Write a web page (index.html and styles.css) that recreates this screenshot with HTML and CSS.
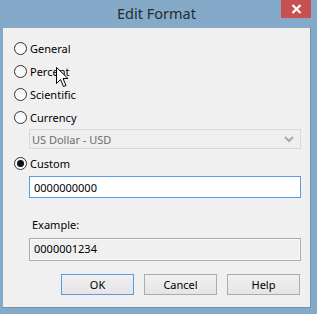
FILE: index.html
```html
<!DOCTYPE html>
<html lang="en">
  <head>
    <meta charset="UTF-8" />
    <meta name="viewport" content="width=device-width, initial-scale=1.0" />
    <title>Edit Format</title>
    <link rel="stylesheet" href="styles.css">
  </head>
  <body>
    <div class="window">
      <div class="titlebar">
        <span></span>
        <span class="title">Edit Format</span>
        <button type="button" class="close">
          <svg width="11" height="10" viewBox="0 0 11 10">
            <path d="M1.5 1 L9.5 9 M9.5 1 L1.5 9" stroke="#fff" stroke-width="2.2" />
          </svg>
        </button>
      </div>
      <div class="content">
        <label class="option"><input type="radio" name="fmt" /> General</label>
        <label class="option"><input type="radio" name="fmt" /> Percent</label>
        <label class="option"><input type="radio" name="fmt" /> Scientific</label>
        <label class="option"><input type="radio" name="fmt" /> Currency</label>
        <div class="select disabled">
          <span>US Dollar - USD</span>
          <svg width="10" height="7" viewBox="0 0 10 7">
            <path d="M1 1 L5 5 L9 1" fill="none" stroke="#a8a8a8" stroke-width="2" />
          </svg>
        </div>
        <label class="option custom"><input type="radio" name="fmt" checked /> Custom</label>
        <input type="text" class="field" value="0000000000" />
        <div class="example-label">Example:</div>
        <div class="example">0000001234</div>
        <div class="buttons">
          <button type="button" class="btn default">OK</button>
          <button type="button" class="btn">Cancel</button>
          <button type="button" class="btn">Help</button>
        </div>
      </div>
    </div>

    <!-- mouse pointer over the Percent option -->
    <svg class="pointer" width="13" height="21" viewBox="0 0 13 21">
      <path d="M0.5 0.5 L0.5 16.5 L4.5 12.5 L7.5 19.5 L10 18.5 L7 11.5 L12 11.5 Z"
        fill="#fff" stroke="#000" stroke-width="1" stroke-linejoin="miter" />
    </svg>
  </body>
</html>
```

FILE: styles.css
```css
/* Page / window frame */
body {
  margin: 0;
  background-color: #85aac9;
  font-family: "Noto Sans", "Open Sans", sans-serif;
  font-size: 11px;
  color: #000;
}

.window {
  width: 317px;
  height: 314px;
  display: flex;
  flex-direction: column;
}

/* Title bar */
.titlebar {
  height: 28px;
  display: grid;
  grid-template-columns: 1fr auto 1fr;
  align-items: start;
}

.title {
  font-size: 14.5px;
  color: #2b2b2b;
  line-height: 26px;
  padding-right: 4px;
}

.close {
  justify-self: end;
  margin-right: 6px;
  width: 30px;
  height: 18px;
  border: none;
  padding: 0;
  background-color: #c75050;
  display: flex;
  align-items: center;
  justify-content: center;
}

/* Client area */
.content {
  margin: 0 6px 0 3px;
  height: 280px;
  box-sizing: border-box;
  background-color: #f0f0f0;
  border-right: 1px solid #7090ad;
  border-bottom: 1px solid #7090ad;
  padding: 9px 0 0 11px;
  display: flex;
  flex-direction: column;
  align-items: flex-start;
}

.option {
  height: 23px;
  display: flex;
  align-items: center;
  gap: 3px;
}

.option input {
  appearance: none;
  margin: 0;
  width: 13px;
  height: 13px;
  border: 1px solid #333;
  border-radius: 50%;
  background: linear-gradient(#f4f4f4, #fff);
  box-sizing: border-box;
  display: flex;
  align-items: center;
  justify-content: center;
}

.option input:checked::after {
  content: "";
  width: 7px;
  height: 7px;
  border-radius: 50%;
  background-color: #111;
}

.custom {
  margin-top: 3px;
}

/* Currency drop-down (disabled) */
.select {
  margin-left: 15px;
  width: 272px;
  height: 20px;
  box-sizing: border-box;
  border: 1px solid #d9d9d9;
  background-color: #efefef;
  color: #6d6d6d;
  display: flex;
  align-items: center;
  justify-content: space-between;
  padding: 0 6px 0 2px;
}

/* Custom format field */
.field {
  margin: 1px 0 0 15px;
  width: 272px;
  height: 22px;
  box-sizing: border-box;
  border: 1px solid #569de5;
  background-color: #fff;
  font: inherit;
  padding: 0 0 0 4px;
  outline: none;
}

.example-label {
  margin: 20px 0 0 18px;
  height: 20px;
  line-height: 14px;
}

.example {
  margin-left: 15px;
  width: 272px;
  height: 23px;
  box-sizing: border-box;
  border: 1px solid #ababab;
  box-shadow: inset 0 0 0 1px #fbfbfb;
  padding-left: 4px;
  line-height: 20px;
}

/* Dialog buttons */
.buttons {
  margin: 13px 0 0 47px;
  display: flex;
  gap: 10px;
}

.btn {
  width: 73px;
  height: 21px;
  border: 1px solid #acacac;
  background: linear-gradient(#f0f0f0, #e5e5e5);
  font: inherit;
  padding: 0;
}

.btn.default {
  border-color: #569de5;
}

.pointer {
  position: absolute;
  left: 56px;
  top: 67px;
}
```
